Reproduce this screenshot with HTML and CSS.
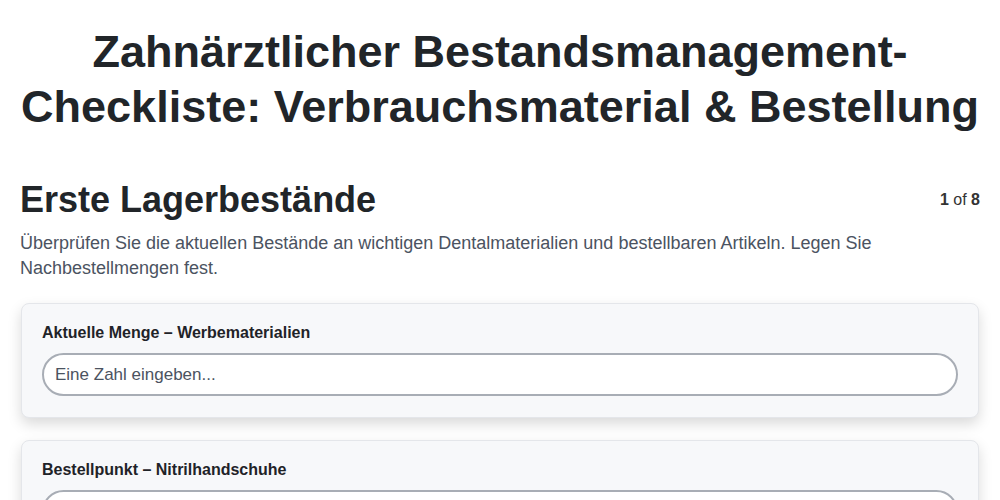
FILE: index.html
```html
<!DOCTYPE html>
<html lang="de">
<head>
  <meta charset="UTF-8">
  <meta name="viewport" content="width=device-width, initial-scale=1.0">
  <title>Zahnärztlicher Bestandsmanagement-Checkliste</title>
  <link rel="stylesheet" href="styles.css">
</head>
<body>
  <h1>Zahnärztlicher Bestandsmanagement-Checkliste: Verbrauchsmaterial &amp; Bestellung</h1>

  <div class="step-head">
    <h2>Erste Lagerbestände</h2>
    <div class="step-count"><b>1</b> of <b>8</b></div>
  </div>
  <p class="step-desc">Überprüfen Sie die aktuellen Bestände an wichtigen Dentalmaterialien und bestellbaren Artikeln. Legen Sie Nachbestellmengen fest.</p>

  <div class="field-card">
    <label for="q1">Aktuelle Menge – Werbematerialien</label>
    <input type="number" id="q1" placeholder="Eine Zahl eingeben...">
  </div>

  <div class="field-card">
    <label for="q2">Bestellpunkt – Nitrilhandschuhe</label>
    <input type="number" id="q2" placeholder="Eine Zahl eingeben...">
  </div>

  <div class="field-card">
    <label for="q3">Aktuelle Menge – Abformmaterial</label>
    <input type="number" id="q3" placeholder="Eine Zahl eingeben...">
  </div>
</body>
</html>
```
FILE: styles.css
```css
*, *::before, *::after {
    box-sizing: border-box;
}
body {
    margin: 0;
    padding: 20px;
    font-family: 'Liberation Sans', Arial, sans-serif;
    background: #fff;
    color: #1f2328;
}
h1 {
    text-align: center;
    font-size: 45px;
    line-height: 55px;
    font-weight: bold;
    margin: 4px 0 44px;
    color: #212529;
}
.step-head {
    display: flex;
    justify-content: space-between;
    align-items: center;
}
h2 {
    margin: 0;
    font-size: 36px;
    line-height: 44px;
    color: #212529;
}
.step-count {
    font-size: 16px;
    color: #333;
}
.step-desc {
    margin: 9px 0 22px;
    font-size: 18px;
    line-height: 25px;
    color: #4b5361;
}
.field-card {
    background: #f7f8fa;
    border: 1px solid #e4e6ea;
    border-radius: 8px;
    padding: 20px 20px 21px;
    margin: 0 1px 22px;
    box-shadow: 0 6px 14px rgba(0, 0, 0, 0.15);
}
label {
    display: block;
    font-weight: bold;
    font-size: 16px;
    line-height: 18px;
    margin-bottom: 11px;
    color: #1f2328;
}
input {
    display: block;
    width: 100%;
    height: 43px;
    padding: 0 11px;
    border: 2px solid #a8adb5;
    border-radius: 22px;
    background: #fff;
    font-family: inherit;
    font-size: 17px;
    color: #333;
    appearance: none;
    -moz-appearance: textfield;
}
input::placeholder {
    color: #4b5361;
}
input::-webkit-outer-spin-button,
input::-webkit-inner-spin-button {
    -webkit-appearance: none;
    margin: 0;
}
```
